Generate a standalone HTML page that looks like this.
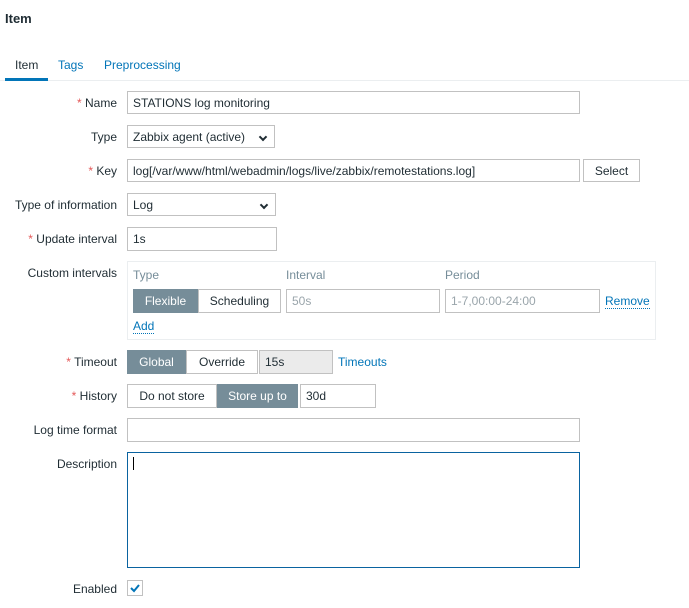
<!DOCTYPE html>
<html><head><style>
body{margin:0;width:689px;height:608px;background:#fff;font-family:"Liberation Sans",Arial,sans-serif;font-size:12px;color:#1f2c33;position:relative;overflow:hidden}
.a{position:absolute}
.lbl{position:absolute;right:572px;white-space:nowrap;line-height:14px;margin-top:1px}
.req{color:#e45959}
.in{position:absolute;box-sizing:border-box;border:1px solid #c1c1c1;height:24px;line-height:22px;padding-left:5px;white-space:nowrap;background:#fff}
.btn{position:absolute;box-sizing:border-box;height:24px;line-height:22px;text-align:center;border:1px solid #c1c1c1;background:#fff}
.on{background:#768d99;color:#fff;border-color:#768d99}
.lnk{color:#0275b8}
.dot{border-bottom:1px dotted #0275b8}
.chev{position:absolute;right:8px;top:8px;width:4px;height:4px;border-right:2px solid #1f2c33;border-bottom:2px solid #1f2c33;transform:rotate(45deg)}
</style></head><body>
<div class="a" style="left:5px;top:11px;font-weight:bold;font-size:13px">Item</div>
<div class="a" style="left:0;top:80px;width:689px;height:1px;background:#ebeef0"></div>
<div class="a" style="left:5px;top:78px;width:43px;height:3px;background:#0275b8"></div>
<div class="a" style="left:15px;top:58px">Item</div>
<div class="a lnk" style="left:58px;top:58px">Tags</div>
<div class="a lnk" style="left:104px;top:58px">Preprocessing</div>

<div class="lbl" style="top:95px"><span class="req">*</span> Name</div>
<div class="in" style="left:127px;top:91px;width:453px;height:23px">STATIONS log monitoring</div>
<div class="lbl" style="top:129px">Type</div>
<div class="in" style="left:127px;top:125px;width:148px;height:23px">Zabbix agent (active)<span class="chev"></span></div>
<div class="lbl" style="top:163px"><span class="req">*</span> Key</div>
<div class="in" style="left:127px;top:159px;width:453px;height:23px">log[/var/www/html/webadmin/logs/live/zabbix/remotestations.log]</div>
<div class="btn" style="left:583px;top:159px;width:57px;height:23px">Select</div>
<div class="lbl" style="top:197px">Type of information</div>
<div class="in" style="left:127px;top:193px;width:149px;height:23px">Log<span class="chev"></span></div>
<div class="lbl" style="top:231px"><span class="req">*</span> Update interval</div>
<div class="in" style="left:127px;top:227px;width:150px">1s</div>

<div class="lbl" style="top:265px">Custom intervals</div>
<div class="a" style="left:127px;top:261px;width:527px;height:77px;border:1px solid #ebeef0"></div>
<div class="a" style="left:133px;top:268px;color:#768d99">Type</div>
<div class="a" style="left:286px;top:268px;color:#768d99">Interval</div>
<div class="a" style="left:445px;top:268px;color:#768d99">Period</div>
<div class="btn on" style="left:133px;top:289px;width:65px">Flexible</div>
<div class="btn" style="left:198px;top:289px;width:83px">Scheduling</div>
<div class="in" style="left:286px;top:289px;width:154px;color:#9aa5ab">50s</div>
<div class="in" style="left:445px;top:289px;width:155px;color:#9aa5ab">1-7,00:00-24:00</div>
<div class="a lnk dot" style="left:605px;top:294px">Remove</div>
<div class="a lnk dot" style="left:133px;top:319px">Add</div>

<div class="lbl" style="top:354px"><span class="req">*</span> Timeout</div>
<div class="btn on" style="left:127px;top:350px;width:59px">Global</div>
<div class="btn" style="left:186px;top:350px;width:72px">Override</div>
<div class="in" style="left:259px;top:350px;width:74px;background:#ebebeb">15s</div>
<div class="a lnk" style="left:338px;top:355px">Timeouts</div>

<div class="lbl" style="top:388px"><span class="req">*</span> History</div>
<div class="btn" style="left:127px;top:384px;width:90px">Do not store</div>
<div class="btn on" style="left:217px;top:384px;width:81px">Store up to</div>
<div class="in" style="left:300px;top:384px;width:76px">30d</div>

<div class="lbl" style="top:422px">Log time format</div>
<div class="in" style="left:127px;top:418px;width:453px">&nbsp;</div>
<div class="lbl" style="top:456px">Description</div>
<div class="a" style="left:127px;top:452px;width:451px;height:114px;border:1px solid #0a63a0"></div>
<div class="a" style="left:133px;top:457px;width:1px;height:13px;background:#000"></div>
<div class="lbl" style="top:581px">Enabled</div>
<div class="a" style="left:127px;top:580px;width:14px;height:14px;border:1px solid #c1c1c1;background:#fff">
<svg width="14" height="14" style="position:absolute;left:0;top:0"><path d="M3 7 L6 10 L11 4" stroke="#0275b8" stroke-width="2" fill="none"/></svg></div>
</body></html>
